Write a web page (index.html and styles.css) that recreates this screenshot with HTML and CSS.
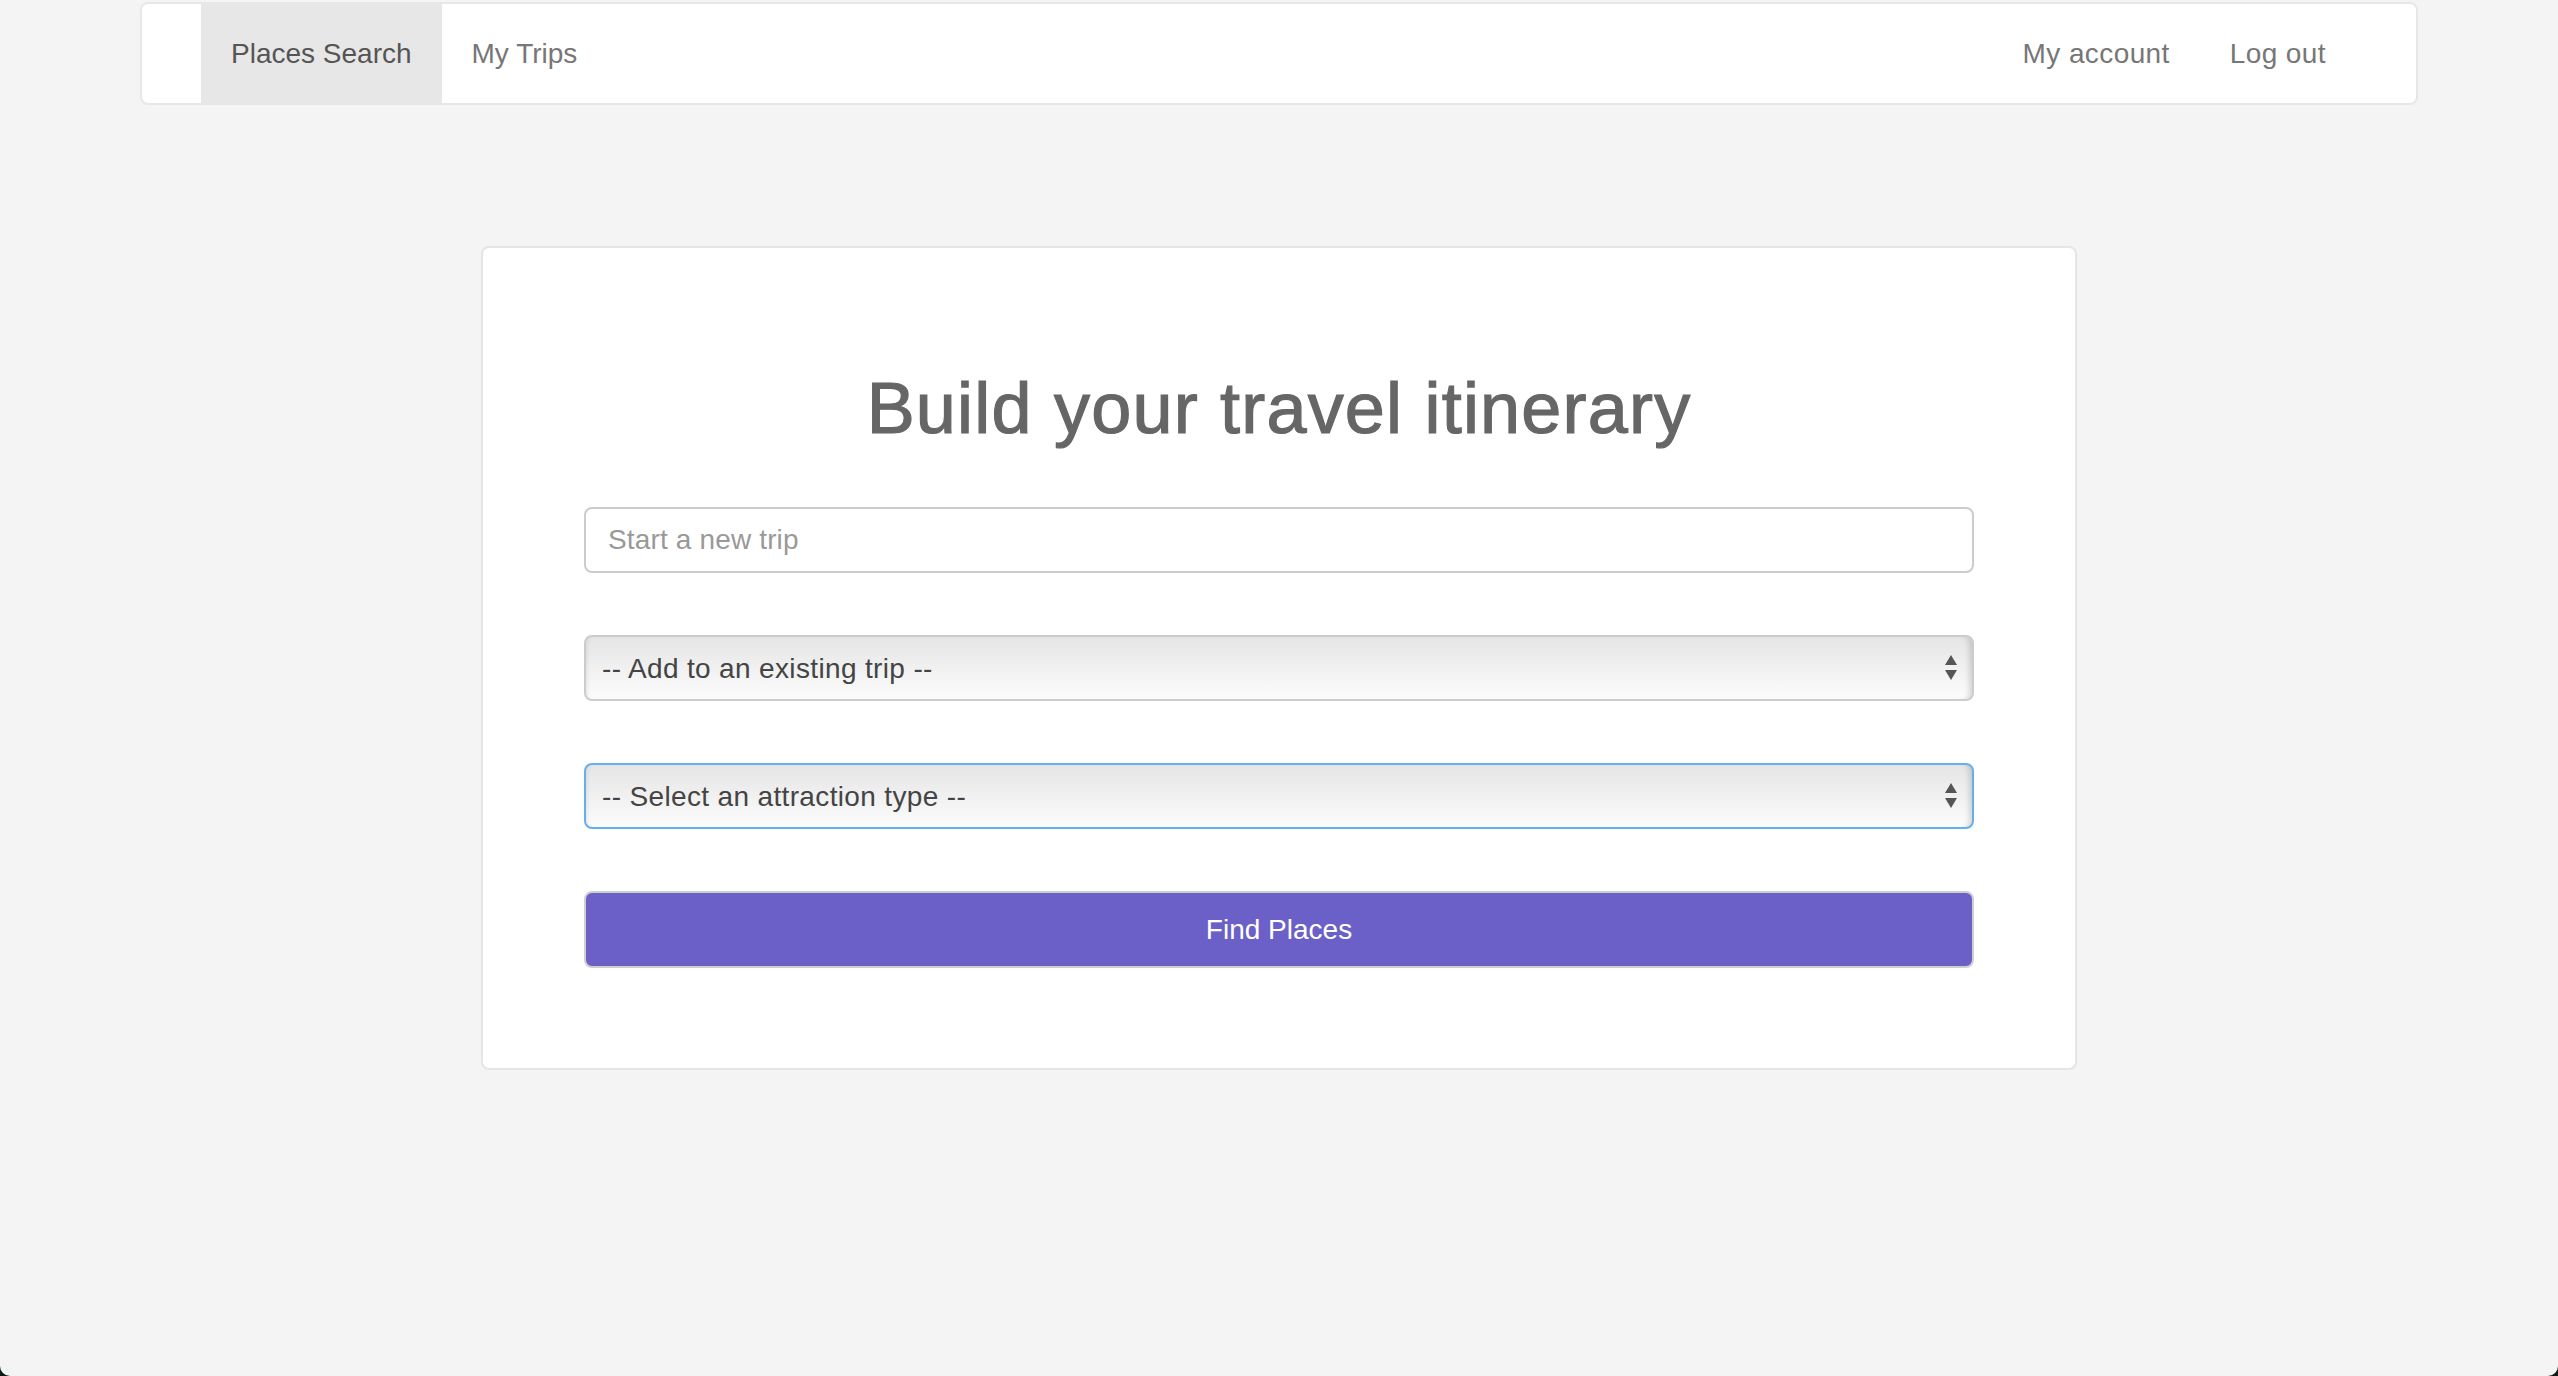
FILE: index.html
```html
<!DOCTYPE html>
<html lang="en">
<head>
<meta charset="utf-8">
<title>Places Search</title>
<link rel="stylesheet" href="styles.css">
</head>
<body>
<nav class="navbar">
  <ul class="nav nav-left">
    <li class="nav-item active"><a href="#">Places Search</a></li>
    <li class="nav-item"><a href="#">My Trips</a></li>
  </ul>
  <ul class="nav nav-right">
    <li class="nav-item"><a href="#">My account</a></li>
    <li class="nav-item"><a href="#">Log out</a></li>
  </ul>
</nav>

<main class="card">
  <h1 class="title">Build your travel itinerary</h1>
  <form class="search-form">
    <input class="field text-field" type="text" placeholder="Start a new trip">
    <select class="field select-field">
      <option>-- Add to an existing trip --</option>
    </select>
    <select class="field select-field focused">
      <option>-- Select an attraction type --</option>
    </select>
    <button class="find-btn" type="button">Find Places</button>
  </form>
</main>
<div class="screen-corners"></div>
</body>
</html>
```

FILE: styles.css
```css
* { box-sizing: border-box; }

html, body {
  margin: 0;
  padding: 0;
  height: 100%;
}

body {
  background: #f4f4f4;
  font-family: "Liberation Sans", Arial, Helvetica, sans-serif;
  color: #555;
  overflow: hidden;
}

.navbar {
  width: 2278px;
  height: 103px;
  margin: 2px auto 0;
  background: #fff;
  border: 2px solid #e7e7e7;
  border-radius: 8px;
  display: flex;
  justify-content: space-between;
  padding: 0 60px 0 59px;
}

.nav {
  list-style: none;
  margin: 0;
  padding: 0;
  display: flex;
}

.nav-item a {
  display: block;
  height: 100%;
  padding: 0 30px;
  font-size: 28px;
  line-height: 99px;
  color: #777;
  text-decoration: none;
}

.nav-right .nav-item a {
  letter-spacing: 0.4px;
}

.nav-item.active a {
  background: #e7e7e7;
  color: #555;
}

.card {
  width: 1596px;
  margin: 141px auto 0;
  background: #fff;
  border: 2px solid #e5e5e5;
  border-radius: 8px;
  padding: 0 101px 100px;
}

.title {
  margin: 121px 0 0;
  font-size: 72px;
  line-height: 1.1;
  font-weight: normal;
  letter-spacing: 1.2px;
  -webkit-text-stroke: 1.2px #666;
  color: #666;
  text-align: center;
}

.search-form {
  display: flex;
  flex-direction: column;
  margin-top: 59px;
}

.field {
  width: 100%;
  height: 66px;
  border: 2px solid #ccc;
  border-radius: 8px;
  font-family: "Liberation Sans", Arial, Helvetica, sans-serif;
  font-size: 28px;
  margin: 0;
  outline: none;
}

.text-field {
  padding: 0 22px;
  color: #555;
  background: #fff;
  letter-spacing: 0.15px;
}

.text-field::placeholder {
  color: #999;
}

.select-field {
  -webkit-appearance: none;
  appearance: none;
  margin-top: 62px;
  padding: 0 50px 0 16px;
  color: #444;
  letter-spacing: 0.35px;
  background-color: #efefef;
  background-image:
    url("data:image/svg+xml;utf8,<svg xmlns='http://www.w3.org/2000/svg' width='14' height='26' viewBox='0 0 14 26'><path d='M7 0 L13 10 L1 10 Z' fill='%23555'/><path d='M1 15 L13 15 L7 25 Z' fill='%23555'/></svg>"),
    linear-gradient(#e5e5e5, #fcfcfc);
  background-repeat: no-repeat, no-repeat;
  background-position: right 14px center, 0 0;
  background-size: 14px 26px, 100% 100%;
  box-shadow: inset -7px 0 6px -5px rgba(0, 0, 0, 0.18), inset 5px 0 5px -5px rgba(0, 0, 0, 0.12);
}

.select-field.focused {
  border-color: #66afe9;
}

.find-btn {
  margin-top: 62px;
  height: 77px;
  width: 100%;
  background: #6b5fc8;
  border: 2px solid #cfcfcf;
  border-radius: 8px;
  color: #fff;
  font-family: "Liberation Sans", Arial, Helvetica, sans-serif;
  font-size: 28px;
  cursor: pointer;
}

.screen-corners {
  position: fixed;
  inset: 0;
  border-radius: 0 0 10px 10px;
  box-shadow: 0 0 0 30px #0f1a17;
  pointer-events: none;
}
```
